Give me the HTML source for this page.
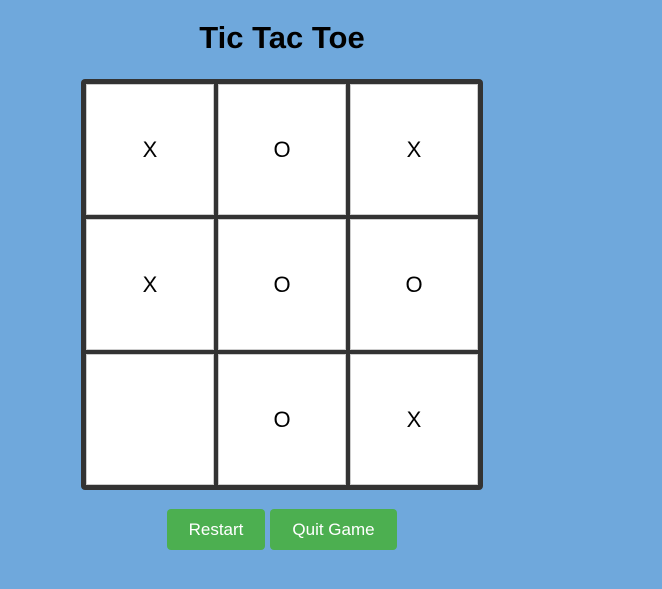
<!DOCTYPE html>
<html><head><style>
body{margin:0;width:662px;height:589px;background:#6fa8dc;font-family:"Liberation Sans",Arial,sans-serif;position:relative;overflow:hidden}
h1{position:absolute;left:0;width:564px;top:20px;margin:0;text-align:center;font-size:31px;font-weight:bold;line-height:36px}
.board{position:absolute;left:81px;top:79px;width:392px;height:401px;padding:5px;background:#333;border-radius:4px;display:grid;grid-template-columns:128px 128px 128px;grid-template-rows:131px 131px 131px;gap:4px}
.c{background:#fff;border:1px solid #ccc;box-sizing:border-box;display:flex;align-items:center;justify-content:center;font-size:22px;color:#000}
.b{position:absolute;top:509px;height:41px;background:#4caf50;color:#fff;border-radius:4px;font-size:17px;display:flex;align-items:center;justify-content:center}
</style></head><body>
<h1>Tic Tac Toe</h1>
<div class="board">
<div class="c">X</div><div class="c">O</div><div class="c">X</div>
<div class="c">X</div><div class="c">O</div><div class="c">O</div>
<div class="c"></div><div class="c">O</div><div class="c">X</div>
</div>
<div class="b" style="left:167px;width:98px">Restart</div>
<div class="b" style="left:270px;width:127px">Quit Game</div>
</body></html>
